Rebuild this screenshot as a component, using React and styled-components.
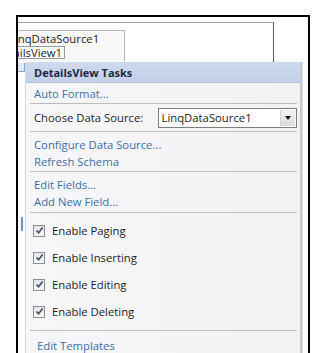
import React from 'react';
import styled, { createGlobalStyle } from 'styled-components';

const GlobalStyle = createGlobalStyle`
  html, body {
    margin: 0;
    padding: 0;
    background: #fff;
    overflow: hidden;
  }
  body {
    font-family: "Open Sans", "Noto Sans", sans-serif;
  }
`;

const Page = styled.div`
  width: 328px;
  height: 353px;
  padding: 15px 0 0 16px;
  box-sizing: border-box;
  overflow: hidden;
`;

const Frame = styled.div`
  position: relative;
  width: 294px;
  height: 400px;
  box-sizing: border-box;
  border: 2px solid #000;
  border-bottom: none;
  overflow: hidden;
  background: #fff;
`;

const Surface = styled.div`
  margin-top: 5px;
  width: 256px;
  height: 40px;
  box-sizing: border-box;
  border-top: 1px solid #9aa3b3;
  border-right: 1px solid #44577a;
  padding-top: 7px;
`;

const ControlBox = styled.div`
  width: 116px;
  height: 31px;
  margin-left: -9px;
  box-sizing: border-box;
  background: #f7f7f7;
  border-top: 1px solid #b8b8b8;
  border-right: 1px solid #b8b8b8;
  font-size: 11.3px;
  line-height: 14px;
  color: #222;
  padding-top: 1px;
`;

const NameTag = styled.span`
  display: inline-block;
  margin-left: -15px;
  padding: 0 2px 0 0;
  border: 1px solid #9a9a9a;
  background: #fff;
  line-height: 11px;
`;

const SmartTag = styled.div`
  position: absolute;
  left: 0;
  top: 46px;
  width: 6px;
  height: 8px;
  border-right: 1px solid #7fa2cf;
  border-bottom: 1px solid #7fa2cf;
  background: #dfe8f5;
`;

const SelectLine = styled.div`
  position: absolute;
  left: 3px;
  top: 200px;
  width: 2px;
  height: 14px;
  background: #6d8fc2;
`;

const TaskPanel = styled.div`
  position: absolute;
  left: 7px;
  top: 45px;
  width: 274px;
  height: 320px;
  background: linear-gradient(90deg, #f7f7f9 0%, #f2f2f5 100%);
  border-left: 1px solid #d4d9e2;
  box-shadow: 2px 0 0 #c9c9cc, 3px 0 0 #dedee0;
  font-size: 11.3px;
  color: #1e1e1e;
`;

const Header = styled.div`
  height: 21px;
  box-sizing: border-box;
  padding: 1px 0 0 8px;
  display: flex;
  align-items: center;
  font-size: 11px;
  font-weight: 700;
  color: #1b2a44;
  background: linear-gradient(180deg, #cfdaee 0%, #c2d0ea 100%);
  border-bottom: 1px solid #b4c2dc;
`;

const Section = styled.div`
  margin: 0 3px 0 4px;
  padding: ${p => p.$pad || '0'};
  border-bottom: ${p => (p.$last ? 'none' : '1px solid #bdbdc0')};
`;

const LinkRow = styled.div`
  height: ${p => p.$h || 17}px;
  box-sizing: border-box;
  padding-top: 1px;
  display: flex;
  align-items: center;
  padding-left: ${p => p.$indent || 4}px;
  color: #3b6fa8;
`;

const FieldRow = styled.div`
  height: 27px;
  display: flex;
  align-items: center;
  padding-left: 4px;
`;

const Label = styled.span`
  width: 124px;
`;

const Select = styled.div`
  width: 140px;
  height: 20px;
  box-sizing: border-box;
  display: flex;
  align-items: center;
  background: #fff;
  border: 1px solid #7d7d80;
  padding-left: 3px;
`;

const SelectText = styled.span`
  flex: 1;
`;

const SelectButton = styled.span`
  width: 14px;
  height: 16px;
  margin-right: 1px;
  display: flex;
  align-items: center;
  justify-content: center;
  background: linear-gradient(180deg, #f2f2f2 0%, #dcdcdc 100%);
  border-left: 1px solid #d0d0d0;
  &::after {
    content: '';
    border-left: 3px solid transparent;
    border-right: 3px solid transparent;
    border-top: 4px solid #111;
  }
`;

const CheckRow = styled.div`
  height: 27px;
  display: flex;
  align-items: center;
  padding-left: 3px;
  gap: 7px;
`;

const Box = styled.span`
  width: 12px;
  height: 12px;
  box-sizing: border-box;
  border: 1px solid #8e8f8f;
  background: linear-gradient(180deg, #e6e6e6 0%, #f6f6f6 100%);
  display: flex;
  align-items: center;
  justify-content: center;
`;

const Check = () => (
  <Box>
    <svg width="9" height="9" viewBox="0 0 9 9">
      <path d="M1.5 4.5 L3.6 6.8 L7.6 1.6" fill="none" stroke="#3d4d6b" strokeWidth="1.6" />
    </svg>
  </Box>
);

const checks = ['Enable Paging', 'Enable Inserting', 'Enable Editing', 'Enable Deleting'];

export default function App() {
  return (
    <Page>
      <GlobalStyle />
      <Frame>
        <Surface>
          <ControlBox>
            LinqDataSource1
            <br />
            <NameTag>DetailsView1</NameTag>
          </ControlBox>
        </Surface>
        <SmartTag />
        <SelectLine />
        <TaskPanel>
          <Header>DetailsView Tasks</Header>
          <Section>
            <LinkRow $h={20}>Auto Format...</LinkRow>
          </Section>
          <Section>
            <FieldRow>
              <Label>Choose Data Source:</Label>
              <Select>
                <SelectText>LinqDataSource1</SelectText>
                <SelectButton />
              </Select>
            </FieldRow>
          </Section>
          <Section $pad="3px 0 2px">
            <LinkRow>Configure Data Source...</LinkRow>
            <LinkRow>Refresh Schema</LinkRow>
          </Section>
          <Section $pad="3px 0 3px">
            <LinkRow>Edit Fields...</LinkRow>
            <LinkRow>Add New Field...</LinkRow>
          </Section>
          <Section $pad="4px 0 5px">
            {checks.map(c => (
              <CheckRow key={c}>
                <Check />
                <span>{c}</span>
              </CheckRow>
            ))}
          </Section>
          <Section $pad="5px 0 0" $last>
            <LinkRow $indent={7}>Edit Templates</LinkRow>
          </Section>
        </TaskPanel>
      </Frame>
    </Page>
  );
}
